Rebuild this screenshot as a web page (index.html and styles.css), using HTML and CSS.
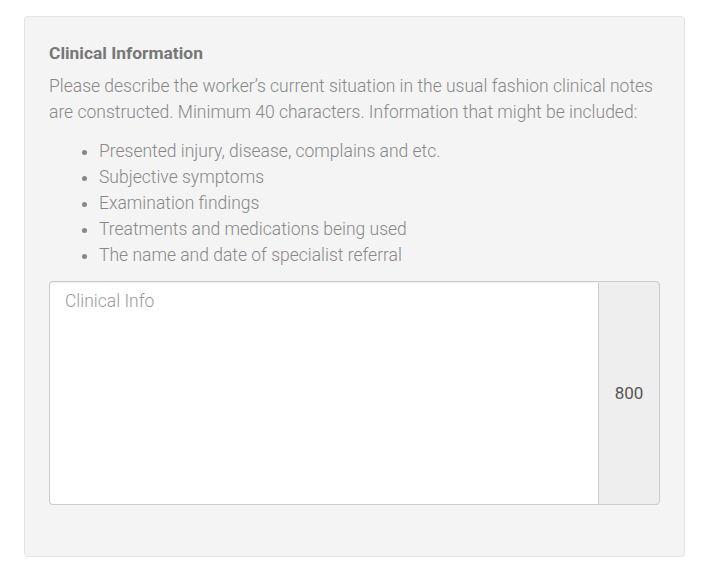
FILE: index.html
```html
<!DOCTYPE html>
<html>
<head>
<meta charset="utf-8">
<link rel="stylesheet" href="styles.css">
</head>
<body>
<div class="page">
  <section class="panel">
    <h3 class="title">Clinical Information</h3>
    <p class="desc">Please describe the worker’s current situation in the usual fashion clinical notes are constructed. Minimum 40 characters. Information that might be included:</p>
    <ul class="list">
      <li>Presented injury, disease, complains and etc.</li>
      <li>Subjective symptoms</li>
      <li>Examination findings</li>
      <li>Treatments and medications being used</li>
      <li>The name and date of specialist referral</li>
    </ul>
    <div class="input-group">
      <textarea class="field" placeholder="Clinical Info"></textarea>
      <span class="addon">800</span>
    </div>
  </section>
</div>
</body>
</html>
```

FILE: styles.css
```css
html, body {
  margin: 0;
  padding: 0;
  background: #ffffff;
}
body {
  font-family: Roboto, "Liberation Sans", sans-serif;
}
.page {
  padding: 16px 35px 0 24px;
}
.panel {
  box-sizing: border-box;
  width: 661px;
  height: 541px;
  background: #f4f4f4;
  border: 1px solid #e3e3e3;
  border-radius: 4px;
  padding: 24px 24px 0 24px;
}
.title {
  margin: 0;
  font-size: 17.4px;
  line-height: 24px;
  font-weight: 700;
  color: #777777;
}
.desc {
  margin: 8px 0 0 0;
  font-size: 17.5px;
  line-height: 26px;
  font-weight: 300;
  color: #888888;
}
.list {
  margin: 13px 0 0 0;
  padding-left: 50px;
  font-size: 17.5px;
  line-height: 26px;
  font-weight: 300;
  color: #888888;
}
.input-group {
  display: flex;
  margin-top: 13px;
  height: 224px;
}
.field {
  flex: 1;
  margin: 0;
  resize: none;
  background: #ffffff;
  border: 1px solid #cccccc;
  border-right: none;
  border-radius: 4px 0 0 4px;
  padding: 7px 15px;
  font-family: Roboto, "Liberation Sans", sans-serif;
  font-size: 17.5px;
  line-height: 24px;
  font-weight: 300;
  color: #555555;
  box-shadow: inset 0 1px 1px rgba(0,0,0,0.075);
  outline: none;
}
.field::placeholder {
  color: #999999;
}
.addon {
  box-sizing: border-box;
  width: 62px;
  display: flex;
  align-items: center;
  justify-content: center;
  background: #eeeeee;
  border: 1px solid #cccccc;
  border-radius: 0 4px 4px 0;
  font-size: 17px;
  color: #555555;
}
```
